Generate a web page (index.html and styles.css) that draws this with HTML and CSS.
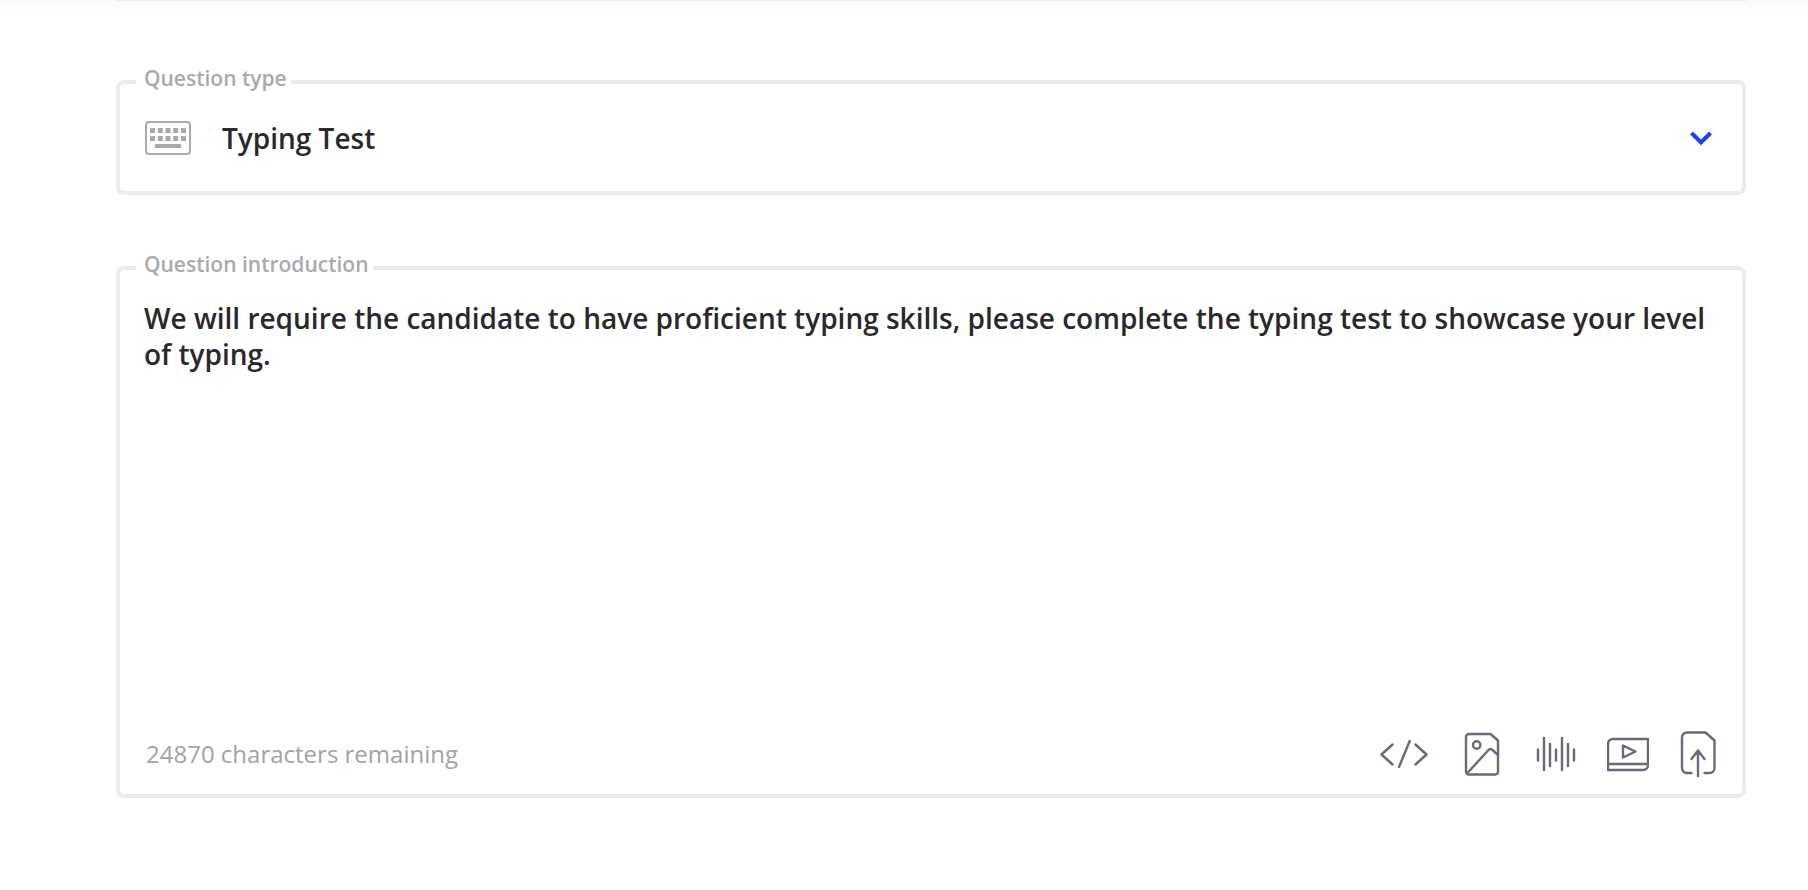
FILE: index.html
```html
<!DOCTYPE html>
<html lang="en">
<head>
    <meta charset="UTF-8">
    <meta name="viewport" content="width=device-width, initial-scale=1.0">
    <title>Question editor</title>
    <link rel="stylesheet" href="styles.css">
</head>
<body>

    <form class="question">
        <div class="field field-type">
            <label class="field-label" for="question-type">Question type</label>
            <svg class="keyboard" width="46" height="34" viewBox="0 0 46 34" aria-hidden="true">
                <rect x="1" y="1" width="44" height="32" rx="3" fill="none" stroke="currentColor" stroke-width="2"/>
                <path fill="currentColor" d="M5 7h5v5H5zM12.8 7h5v5h-5zM20.5 7h5v5h-5zM28.2 7h5v5h-5zM36 7h5v5h-5zM5 15h5v5H5zM12.8 15h5v5h-5zM20.5 15h5v5h-5zM28.2 15h5v5h-5zM36 15h5v5h-5zM10 23h26v4H10z"/>
            </svg>
            <select id="question-type">
                <option>Typing Test</option>
            </select>
            <svg class="chevron" width="24" height="16" viewBox="0 0 24 16" aria-hidden="true">
                <path d="M2.500 3l9.500 9.500 9.500-9.500"/>
            </svg>
        </div>

        <div class="field field-intro">
            <label class="field-label" for="question-intro">Question introduction</label>
            <textarea id="question-intro" spellcheck="false">We will require the candidate to have proficient typing skills, please complete the typing test to showcase your level of typing.</textarea>
            <div class="footer">
                <span class="remaining">24870 characters remaining</span>
                <div class="tools">
                    <button type="button" aria-label="Insert code">
                        <svg width="54" height="48" viewBox="0 0 54 48">
                            <path d="M15.5 14.5l-11 10 11 10M32.7 11L22 37M38.5 14.5l11 10-11 10"/>
                        </svg>
                    </button>
                    <button type="button" aria-label="Insert image">
                        <svg width="42" height="48" viewBox="0 0 42 48">
                            <path d="M8 4h21.5l7.5 6.5V42a2.5 2.5 0 0 1-2.5 2.5H8A3 3 0 0 1 5 41.5V7a3 3 0 0 1 3-3z"/>
                            <circle cx="15.7" cy="15" r="3.7"/>
                            <path d="M6 43.5L27.5 20q2-2 4 0l5.5 5"/>
                        </svg>
                    </button>
                    <button type="button" aria-label="Insert audio">
                        <svg width="44" height="48" viewBox="0 0 44 48">
                            <path d="M5 19.5v11M11 8v32M17 14v22M23 19.5v11M29 8v32M35 14v22M41 19.5v11"/>
                        </svg>
                    </button>
                    <button type="button" aria-label="Insert video">
                        <svg width="42" height="48" viewBox="0 0 42 48">
                            <path d="M6 9h35v26a5 5 0 0 1-5 5H1V14a5 5 0 0 1 5-5zM1 34h40M16 15.5l12.5 6-12.5 6z"/>
                        </svg>
                    </button>
                    <button type="button" aria-label="Upload file">
                        <svg width="38" height="48" viewBox="0 0 38 48">
                            <path d="M12.5 43H8a5 5 0 0 1-5-5V7.5a5 5 0 0 1 5-5h18.5l9 8V38a5 5 0 0 1-5 5h-5M19 46V20.5M12.5 29l6.500-8.500 6.500 8.500"/>
                        </svg>
                    </button>
                </div>
            </div>
        </div>
    </form>

</body>
</html>
```

FILE: styles.css
```css
* {
    box-sizing: border-box;
}
body {
    margin: 0;
    padding: 0 62px 92px 116px;
    background: linear-gradient(#f9f9f9, #ffffff 18px) no-repeat #ffffff;
    font-family: "Open Sans", "Noto Sans", sans-serif;
    color: #28282d;
}
.question {
    display: flex;
    flex-direction: column;
    gap: 71px;
    padding-top: 79px;
    border-top: 1px solid #ebebed;
}
.field {
    position: relative;
    border: 4px solid #ebecee;
    border-radius: 8px;
    background: #ffffff;
}

/* label sits on top of the border */
.field-label {
    position: absolute;
    top: -22px;
    left: 16px;
    padding: 0 4px 0 8px;
    background: #ffffff;
    color: #a9a9ae;
    font-size: 21px;
    font-weight: 600;
    line-height: 32px;
}

.field-type {
    display: flex;
    align-items: center;
    padding: 0 29px 0 25px;
}
.keyboard {
    color: #a9a9ae;
}
.chevron {
    margin-left: -24px;
    fill: none;
    stroke: #2340ee;
    stroke-width: 4;
    pointer-events: none;
}
select,
textarea {
    border: 0;
    outline: 0;
    background: none;
    color: inherit;
    font-family: inherit;
    font-size: 28px;
    font-weight: 600;
    line-height: 36px;
}
select {
    appearance: none;
    flex: 1;
    height: 107px;
    padding: 0 31px;
}
textarea {
    display: block;
    width: 100%;
    height: 420px;
    padding: 0;
    resize: none;
}

.field-intro {
    padding: 30px 25px 16px 24px;
}
.footer {
    display: flex;
    align-items: center;
    justify-content: space-between;
    margin-top: 10px;
}
.remaining {
    padding: 0 0 2px 2px;
    color: #a2a2a8;
    font-size: 24px;
}
.tools {
    display: flex;
    gap: 30px;
}
.tools button {
    padding: 0;
    border: 0;
    background: none;
    cursor: pointer;
}
.tools svg {
    display: block;
    fill: none;
    stroke: #696979;
    stroke-width: 2.4;
    stroke-linecap: round;
    stroke-linejoin: round;
}
```
